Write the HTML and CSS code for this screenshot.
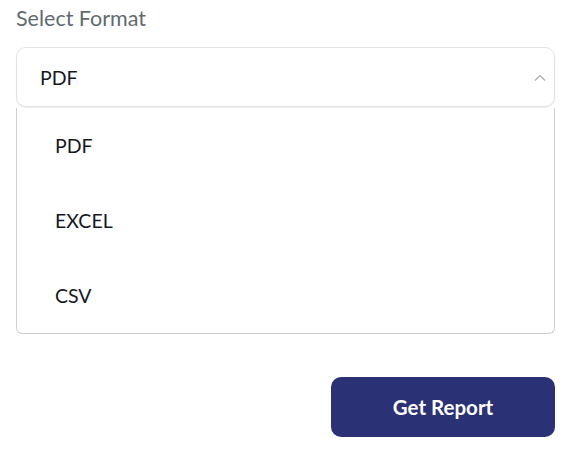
FILE: index.html
```html
<!DOCTYPE html>
<html lang="en">
<head>
<meta charset="utf-8">
<title>Select Format</title>
<link rel="stylesheet" href="styles.css">
</head>
<body>
<div class="wrap">
  <div class="label">Select Format</div>
  <div class="select">
    <span class="value">PDF</span>
    <svg class="chev" width="12" height="8" viewBox="0 0 12 8"><path d="M1 6.5 L6 1.5 L11 6.5" fill="none" stroke="#a9a9b0" stroke-width="1.2"/></svg>
  </div>
  <ul class="menu">
    <li>PDF</li>
    <li>EXCEL</li>
    <li>CSV</li>
  </ul>
  <div class="actions">
    <button class="btn">Get Report</button>
  </div>
</div>
</body>
</html>
```
FILE: styles.css
```css
* { box-sizing: border-box; }
html, body { margin: 0; padding: 0; background: #fff; }
body { font-family: Lato, "Open Sans", sans-serif; }
.wrap { padding: 5px 19px 0 16px; }
.label { font-size: 21.5px; line-height: 27px; color: #5f6a71; }
.select {
  margin-top: 15px;
  height: 60px;
  border: 1px solid #e2e2e4;
  border-radius: 10px;
  display: flex;
  align-items: center;
  justify-content: space-between;
  padding: 0 8px 0 23px;
  box-shadow: 0 1px 1px rgba(0,0,0,0.08);
}
.value { font-size: 19.5px; color: #16181f; }
.chev { margin-top: 2px; }
.menu {
  list-style: none;
  margin: 1px 0 0;
  padding: 0;
  border: 1px solid #cfcfd2;
  border-top: none;
  border-radius: 0 0 6px 6px;
}
.menu li {
  height: 75px;
  display: flex;
  align-items: center;
  padding-left: 38px;
  font-size: 19.5px;
  color: #16181f;
}
.actions { display: flex; justify-content: flex-end; margin-top: 43px; }
.btn {
  width: 224px;
  height: 60px;
  border: none;
  border-radius: 10px;
  background: #2b3175;
  color: #fff;
  font-family: Lato, "Open Sans", sans-serif;
  font-size: 20.5px;
  font-weight: 700;
}
```
